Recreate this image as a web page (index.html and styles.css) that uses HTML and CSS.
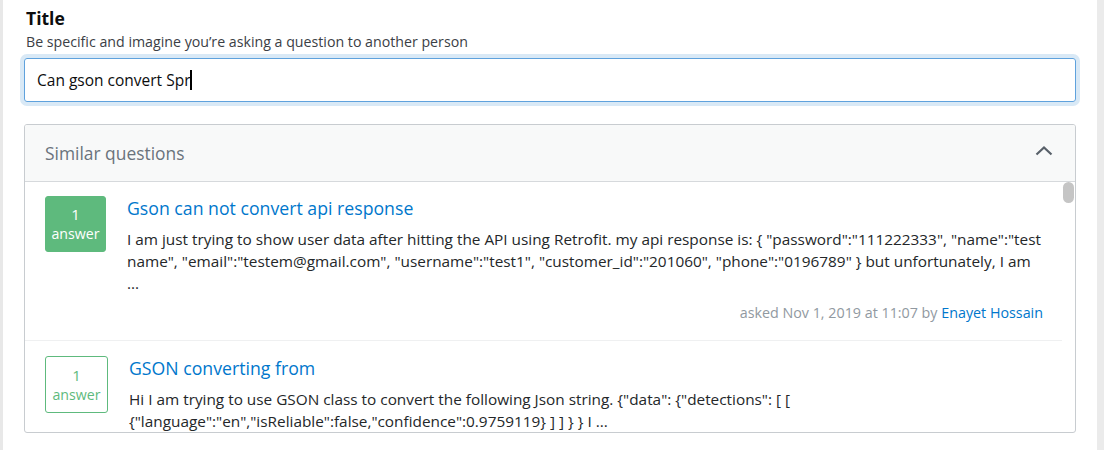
FILE: index.html
```html
<!DOCTYPE html>
<html lang="en">
<head>
<meta charset="utf-8">
<title>Ask a question</title>
<link rel="stylesheet" href="styles.css">
</head>
<body>
<div class="page">
  <div class="field">
    <label class="field-label" for="title">Title</label>
    <div class="field-desc">Be specific and imagine you’re asking a question to another person</div>
    <div class="input"><span class="input-text">Can gson convert Spr</span><span class="caret"></span></div>
  </div>

  <section class="card">
    <header class="card-head">
      <h2 class="card-title">Similar questions</h2>
      <svg class="chevron" width="18" height="11" viewBox="0 0 18 11"><polyline points="1.5,9.5 9,2.5 16.5,9.5" fill="none" stroke="#59616a" stroke-width="2.2"/></svg>
    </header>
    <div class="card-body">
      <div class="list">
        <article class="item">
          <div class="badge filled"><span class="num">1</span><span class="lbl">answer</span></div>
          <div class="summary">
            <a class="q-title" href="#">Gson can not convert api response</a>
            <p class="excerpt">I am just trying to show user data after hitting the API using Retrofit. my api response is: { "password":"111222333", "name":"test name", "email":"testem@gmail.com", "username":"test1", "customer_id":"201060", "phone":"0196789" } but unfortunately, I am ...</p>
            <div class="meta">asked Nov 1, 2019 at 11:07 by <a href="#">Enayet Hossain</a></div>
          </div>
        </article>
        <article class="item">
          <div class="badge outline"><span class="num">1</span><span class="lbl">answer</span></div>
          <div class="summary">
            <a class="q-title" href="#">GSON converting from</a>
            <p class="excerpt">Hi I am trying to use GSON class to convert the following Json string. {"data": {"detections": [ [ {"language":"en","isReliable":false,"confidence":0.9759119} ] ] } } I ...</p>
          </div>
        </article>
      </div>
      <div class="scrollbar"><div class="thumb"></div></div>
    </div>
  </section>
</div>
</body>
</html>
```

FILE: styles.css
```css
* { box-sizing: border-box; }
html, body { margin: 0; padding: 0; background: #fff; }
body {
  font-family: "Open Sans", "Liberation Sans", sans-serif;
  color: #242729;
}
.page {
  height: 450px;
  border-left: 3px solid #e8e8e8;
  border-right: 7px solid #ebebeb;
  padding: 6px 21px 0;
  overflow: hidden;
}
.field { display: flex; flex-direction: column; }
.field-label {
  font-size: 17.5px;
  font-weight: 700;
  color: #0c0d0e;
  padding-left: 2px;
  line-height: 24px;
}
.field-desc {
  font-size: 14.2px;
  color: #3b4045;
  padding-left: 2px;
  line-height: 20px;
  margin-top: 2px;
  margin-bottom: 6px;
}
.input {
  height: 44px;
  border: 1px solid #5fa2dd;
  border-radius: 3px;
  box-shadow: 0 0 0 4px #d9e9f6;
  display: flex;
  align-items: center;
  padding-left: 12px;
  font-size: 15.5px;
  color: #0c0d0e;
}
.caret { display: inline-block; width: 2px; height: 20px; background: #000; }

.card {
  margin-top: 22px;
  border: 1px solid #c8ccd0;
  border-radius: 3px;
  height: 309px;
  display: flex;
  flex-direction: column;
  overflow: hidden;
}
.card-head {
  height: 57px;
  flex: none;
  background: #f8f9f9;
  border-bottom: 1px solid #d6d9dc;
  display: flex;
  align-items: center;
  justify-content: space-between;
  padding: 0 22px 0 20px;
}
.card-title {
  margin: 0;
  font-size: 17.4px;
  font-weight: 400;
  color: #6a737c;
}
.chevron { display: block; margin-top: -6px; }
.card-body { flex: 1; display: flex; min-height: 0; }
.list { flex: 1; overflow: hidden; }
.scrollbar { width: 13px; flex: none; padding: 0 1px; }
.thumb { height: 21px; background: #c5c5c5; border-radius: 6px; }

.item {
  display: flex;
  gap: 21px;
  padding: 14px 19px 17px 20px;
  border-bottom: 1px solid #eff0f1;
}
.item + .item { padding-top: 15px; }
.badge {
  flex: none;
  width: 61px;
  height: 56px;
  border-radius: 3px;
  display: flex;
  flex-direction: column;
  align-items: center;
  justify-content: center;
  font-size: 14.2px;
  line-height: 19px;
}
.badge.filled { background: #5eba7d; color: #fff; border: 1px solid #5eba7d; }
.badge.outline { width: 63px; height: 57px; border: 1px solid #5eba7d; color: #5eba7d; }
.badge .num { font-size: 15px; }
.summary { flex: 1; min-width: 0; }
.q-title {
  display: block;
  font-size: 17.7px;
  line-height: 24px;
  color: #0077cc;
  text-decoration: none;
}
.excerpt {
  margin: 8px 0 0;
  font-size: 15.35px;
  line-height: 22px;
  color: #242729;
}
.meta {
  text-align: right;
  font-size: 14.3px;
  color: #9199a1;
  margin-top: 9px;
  line-height: 20px;
}
.meta a { color: #0077cc; text-decoration: none; }
```
